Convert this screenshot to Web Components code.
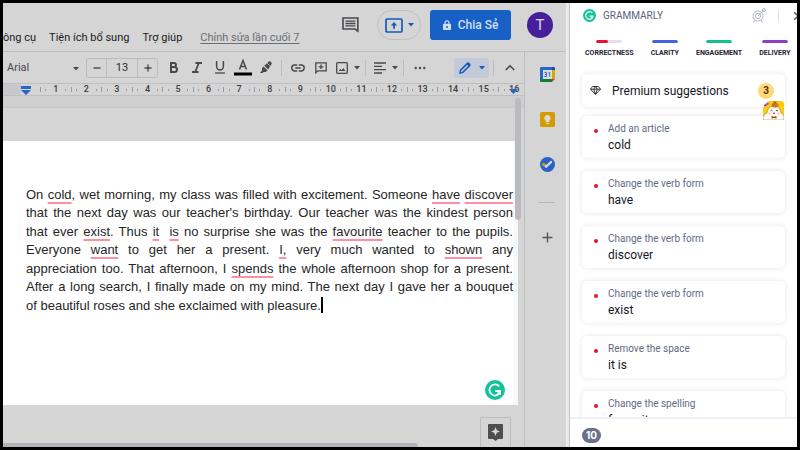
<!DOCTYPE html>
<html lang="vi">
<head>
<meta charset="utf-8">
<meta name="viewport" content="width=device-width, initial-scale=1">
<title>Docs</title>
<style>
  body { margin: 0; background: #000; font-family: Roboto, "Noto Sans", sans-serif; }
</style>
</head>
<body>
<docs-app></docs-app>

<script>
const BASE = `
  * { box-sizing: border-box; }
  button { font: inherit; color: inherit; background: none; border: 0; padding: 0; margin: 0; cursor: pointer; }
  a { color: inherit; text-decoration: none; }
  svg { display: block; flex: none; }
`;

const CARET = '<svg width="6" height="4" viewBox="0 0 6 4" aria-hidden="true"><path d="M0 0h6L3 3.6z" fill="currentColor"/></svg>';

class BaseElement extends HTMLElement {
  constructor() {
    super();
    this.attachShadow({ mode: 'open' });
  }

  connectedCallback() {
    if (this._rendered) return;
    this.shadowRoot.innerHTML = `<style>${BASE}${this.styles()}</style>${this.markup()}`;
    this._rendered = true;
  }

  styles() { return ''; }
  markup() { return ''; }
}

class DocsApp extends BaseElement {
  styles() {
    return `
      :host { display: flex; height: 100vh; box-sizing: border-box; border: 3px solid #000; overflow: hidden; background: #d5d5d5; }
      .docs { flex: 1; min-width: 0; display: flex; flex-direction: column; border-right: 1px solid #c2c2c2; box-shadow: inset -3px 0 #ebebeb; }
      .body { flex: 1; min-height: 0; display: flex; margin-right: 3px; }
      .editor { flex: 1; min-width: 0; display: flex; flex-direction: column; }
      docs-page { flex: 1; min-height: 0; }
      grammar-panel { flex: none; width: 227px; }
    `;
  }
  markup() {
    return `
      <div class="docs">
        <docs-header></docs-header>
        <div class="body">
          <div class="editor">
            <docs-toolbar></docs-toolbar>
            <docs-ruler></docs-ruler>
            <docs-page></docs-page>
          </div>
          <side-rail></side-rail>
        </div>
      </div>
      <grammar-panel></grammar-panel>
    `;
  }
}

class DocsHeader extends BaseElement {
  styles() {
    return `
      :host { display: flex; align-items: center; height: 49px; box-sizing: border-box; padding: 0 13px 4px 0; border-bottom: 1px solid #bdbdbd; margin-right: 3px; font-size: 12px; line-height: 16px; color: #1c1c1c; }
      nav { flex: 1; align-self: flex-end; display: flex; gap: 13px; padding-bottom: 1px; white-space: nowrap; font-size: 11px; }
      .history { margin-left: 5px; color: #6b6e72; text-decoration: underline; text-underline-offset: 2px; }
      .comments { color: #47494d; margin-right: 18px; }
      .present { display: flex; align-items: center; justify-content: center; gap: 5px; width: 44px; height: 30px; margin-right: 9px; border: 1px solid #bfbfbf; border-radius: 15px; color: #1559bd; }
      .share { display: flex; align-items: center; justify-content: center; gap: 7px; width: 81px; height: 30px; margin-right: 16px; border-radius: 3px; background: #1660c6; color: #d5dff0; font-weight: 500; }
      .avatar { width: 26px; height: 26px; border-radius: 50%; background: #46209a; color: #dcd6ea; font-size: 15px; }
    `;
  }
  markup() {
    return `
      <nav aria-label="Menu">
        <a href="#tools">ông cụ</a>
        <a href="#addons">Tiện ích bổ sung</a>
        <a href="#help">Trợ giúp</a>
        <a href="#history" class="history">Chỉnh sửa lần cuối 7</a>
      </nav>
      <button class="comments" aria-label="Comments">
        <svg width="17" height="16" viewBox="0 0 17 16" fill="none" stroke="currentColor" stroke-width="1.6"><path d="M1 1h14.800v13.200L13 12H1z"/><path d="M3.400 4.200h10M3.400 6.500h10M3.400 8.800h10" stroke-width="1.300"/></svg>
      </button>
      <button class="present" aria-label="Present">
        <svg width="18" height="15" viewBox="0 0 18 15"><rect x="1" y="1" width="16" height="13" rx="1" fill="none" stroke="currentColor" stroke-width="1.700"/><path d="M9 4l3.200 3.500H9.900v3.300H8.100V7.500H5.800z" fill="currentColor"/></svg>
        ${CARET}
      </button>
      <button class="share">
        <svg width="8" height="10" viewBox="0 0 8 10"><path d="M2 4V2.800a2 2 0 0 1 4 0V4" fill="none" stroke="currentColor" stroke-width="1.200"/><path fill-rule="evenodd" d="M.8 3.800h6.400q.8 0 .8.800v4.600q0 .8-.8.800H.8Q0 10 0 9.200V4.600q0-.8.800-.8zM4 5.900a1 1 0 1 0 0 2 1 1 0 0 0 0-2z" fill="currentColor"/></svg>
        Chia Sẻ
      </button>
      <button class="avatar">T</button>
    `;
  }
}

class DocsToolbar extends BaseElement {
  styles() {
    return `
      :host { display: flex; align-items: center; height: 31px; padding: 0 3px 0 4px; font-size: 11px; color: #47494d; }
      button { display: flex; align-items: center; justify-content: center; width: 23px; height: 20px; }
      .font { position: relative; width: 72px; margin-right: 7px; }
      .font select { appearance: none; width: 100%; border: 0; margin: 0; padding: 0; background: none; font: inherit; color: inherit; }
      .font svg { position: absolute; right: 0; top: 50%; margin-top: -1px; pointer-events: none; }
      .size { display: flex; width: 72px; height: 20px; margin-right: 4px; border: 1px solid #bcbcbc; border-radius: 3px; }
      .size button { width: 19px; height: 100%; }
      .size input { flex: 1; min-width: 0; padding: 0; border: 0; border-left: 1px solid #bcbcbc; border-right: 1px solid #bcbcbc; background: none; text-align: center; font: inherit; color: #2c2d30; }
      .sep { width: 1px; height: 16px; margin: 0 4px; background: #bcbcbc; }
      .narrow { width: 20px; }
      .caret { width: 9px; }
      .mode { width: 35px; gap: 8px; margin-left: auto; background: #c2cad8; border-radius: 3px; color: #1559bd; }
    `;
  }
  markup() {
    return `
      <div class="font">
        <select aria-label="Font"><option>Arial</option></select>
        ${CARET}
      </div>
      <div class="size">
        <button aria-label="Decrease font size"><svg width="8" height="8" viewBox="0 0 8 8"><path d="M.5 4h7" stroke="currentColor" stroke-width="1.400"/></svg></button>
        <input aria-label="Font size" value="13">
        <button aria-label="Increase font size"><svg width="8" height="8" viewBox="0 0 8 8"><path d="M.5 4h7M4 .5v7" stroke="currentColor" stroke-width="1.400"/></svg></button>
      </div>
      <button aria-label="Bold"><svg width="9" height="11" viewBox="0 0 9 11" fill="none" stroke="currentColor" stroke-width="2"><path d="M2 1h3a2 2 0 0 1 0 4H2zM2 5h3.500a2.400 2.400 0 0 1 0 5H2z"/></svg></button>
      <button aria-label="Italic"><svg width="10" height="11" viewBox="0 0 10 11" fill="none" stroke="currentColor" stroke-width="1.800"><path d="M3.500 1H10M0 10h6.500M6.800 1L3.200 10"/></svg></button>
      <button aria-label="Underline"><svg width="10" height="13" viewBox="0 0 10 13" fill="none" stroke="currentColor"><path d="M1.600 0v5.600a3.400 3.400 0 0 0 6.800 0V0" stroke-width="1.500"/><path d="M0 12h10" stroke-width="1.300"/></svg></button>
      <button aria-label="Text color"><svg width="18" height="17" viewBox="0 0 18 17"><path d="M5.500 10.500L9 1.500l3.500 9M6.600 7.600h4.800" fill="none" stroke="currentColor" stroke-width="1.500"/><path d="M0 13.500h18v3H0z" fill="#000"/></svg></button>
      <button aria-label="Highlight color"><svg width="12" height="13" viewBox="0 0 12 13" fill="currentColor"><path d="M3.500 5.500l4 3.800-1.700 1.700H3.600l-1 1H0l2-2.600V7z"/><path d="M4.300 4.800L8.800.6q.8-.6 1.600 0l1 1q.7.8 0 1.600L8.300 8.500z"/><path d="M7 2l3.800 4" stroke="#d5d5d5" stroke-width=".7"/></svg></button>
      <span class="sep"></span>
      <button aria-label="Insert link"><svg width="14" height="8" viewBox="0 0 14 8" fill="none" stroke="currentColor" stroke-width="1.500"><path d="M6.200 1H3.800a3 3 0 0 0 0 6h2.400M7.800 1h2.400a3 3 0 0 1 0 6H7.800M4.300 4h5.400"/></svg></button>
      <button aria-label="Add comment"><svg width="12" height="12" viewBox="0 0 12 12" fill="none" stroke="currentColor" stroke-width="1.300"><path d="M.8 10.800V.8h10.400v8H2.800zM6 2.500v4.600M3.700 4.800h4.600"/></svg></button>
      <button class="narrow" aria-label="Insert image"><svg width="12" height="12" viewBox="0 0 12 12"><rect x=".7" y=".7" width="10.600" height="10.600" rx="1" fill="none" stroke="currentColor" stroke-width="1.300"/><path d="M2.700 9l1.700-2.200 1.200 1.400L7.400 6l2 3z" fill="currentColor"/></svg></button>
      <button class="caret" aria-label="Image options">${CARET}</button>
      <span class="sep"></span>
      <button class="narrow" aria-label="Align"><svg width="12" height="12" viewBox="0 0 12 12" fill="none" stroke="currentColor" stroke-width="1.300"><path d="M0 1h12M0 4.300h8M0 7.600h12M0 11h8"/></svg></button>
      <button class="caret" aria-label="Align options">${CARET}</button>
      <span class="sep"></span>
      <button aria-label="More"><svg width="12" height="4" viewBox="0 0 12 4" fill="currentColor"><circle cx="1.700" cy="2" r="1.200"/><circle cx="6" cy="2" r="1.200"/><circle cx="10.300" cy="2" r="1.200"/></svg></button>
      <button class="mode" aria-label="Editing mode"><svg width="12" height="12" viewBox="0 0 12 12"><path d="M1 11l.6-2.800L8.400 1.400q.6-.6 1.200 0l1 1q.6.6 0 1.200L3.800 10.400z" fill="none" stroke="currentColor" stroke-width="1.500"/><path d="M7.600 2.200l2.200 2.200L11.300 3 9 .7z" fill="currentColor"/></svg>${CARET}</button>
      <span class="sep"></span>
      <button aria-label="Hide menus"><svg width="10" height="7" viewBox="0 0 10 7"><path d="M.8 6L5 1.800 9.200 6" fill="none" stroke="currentColor" stroke-width="1.600"/></svg></button>
    `;
  }
}

class DocsRuler extends BaseElement {
  styles() {
    return `
      :host { display: block; position: relative; height: 13px; box-sizing: border-box; overflow: hidden; border-top: 1px solid #bfbfc2; border-bottom: 1px solid #bfbfc2; background: linear-gradient(to right, #c7c8cc 18px, #d5d5d5 18px); font-size: 9px; line-height: 11px; color: #3c3d40; }
      .scale { display: grid; grid-template-columns: repeat(16, 1fr); margin-left: 37px; margin-right: -5px; }
      .cell { display: flex; align-items: center; justify-content: space-between; }
      i { width: 1px; height: 5px; background: #98999c; }
      .dot { height: 2px; }
      b { font-weight: 500; width: 10px; display: flex; justify-content: center; }
      .end { width: 0; }
      .mark { position: absolute; top: 2px; }
      .left { left: 18px; }
      .right { right: 6px; top: 5px; }
    `;
  }
  markup() {
    let cells = '';
    for (let n = 1; n <= 16; n++) {
      cells += `<div class="cell"><i></i><i class="dot"></i><b>${n}</b><i class="dot"></i><i class="end"></i></div>`;
    }
    return `
      <div class="scale">${cells}</div>
      <svg class="mark left" width="10" height="9" viewBox="0 0 10 9" fill="#2567cb"><path d="M0 0h10v3H0zM0 4h10L5 9z"/></svg>
      <svg class="mark right" width="9" height="6" viewBox="0 0 9 6" fill="#2567cb"><path d="M0 0h9L4.500 5z"/></svg>
    `;
  }
}

class DocsPage extends BaseElement {
  styles() {
    return `
      :host { display: flex; flex-direction: column; position: relative; }
      .gap { height: 45px; border-top: 11px solid #cfcfcf; box-shadow: inset 0 1px #c9c9c9; }
      .sheet { flex: 1; min-height: 0; padding: 45px 0 0 23px; margin-right: 6px; border-right: 5px solid #f7f8fa; background: #fff; }
      .below { height: 42px; display: flex; align-items: flex-end; }
      .hbar { width: 415px; height: 4px; border-radius: 0 4px 0 0; background: #b3b4b7; }
      .text { display: grid; grid-auto-rows: 1fr; height: 129px; font: 13px/18px "Liberation Sans", Arial, sans-serif; color: #262626; outline: 0; }
      .text div { white-space: nowrap; text-align: justify; text-align-last: justify; }
      .text div:last-child { text-align-last: left; }
      u { text-decoration: underline 2px #ff8ea5; text-underline-offset: 3px; text-decoration-skip-ink: none; }
      .cursor { display: inline-block; width: 2px; height: 16px; background: #000; vertical-align: -3px; }
      .vbar { position: absolute; top: 2px; right: 3px; width: 6px; height: 122px; border-radius: 3px; background: #b9bbbf; }
      .badge { position: absolute; right: 19px; bottom: 47px; }
      .explore { position: absolute; right: 13px; bottom: 0; width: 31px; height: 30px; display: flex; align-items: center; justify-content: center; border: 1px solid #bdbdbd; border-radius: 2px 2px 0 0; border-bottom: 0; }
    `;
  }
  markup() {
    return `
      <div class="gap"></div>
      <div class="sheet">
        <div class="text" contenteditable="true" spellcheck="false" role="textbox" aria-multiline="true" aria-label="Document" lang="en">
          <div>On <u>cold</u>, wet morning, my class was filled with excitement. Someone <u>have</u> <u>discover</u></div>
          <div>that the next day was our teacher's birthday. Our teacher was the kindest person</div>
          <div>that ever <u>exist</u>. Thus <u>it</u>&nbsp; <u>is</u> no surprise she was the <u>favourite</u> teacher to the pupils.</div>
          <div>Everyone <u>want</u> to get her a present. <u>I,</u> very much wanted to <u>shown</u> any</div>
          <div>appreciation too. That afternoon, I <u>spends</u> the whole afternoon shop for a present.</div>
          <div>After a long search, I finally made on my mind. The next day I gave her a bouquet</div>
          <div>of beautiful roses and she exclaimed with pleasure.<span class="cursor"></span></div>
        </div>
      </div>
      <div class="below"><div class="hbar"></div></div>
      <div class="vbar"></div>
      <button class="badge" aria-label="Grammarly"><grammar-logo size="20"></grammar-logo></button>
      <button class="explore" aria-label="Explore">
        <svg width="15" height="17" viewBox="0 0 15 17"><path d="M1 0h13q1 0 1 1v13q0 1-1 1h-4l-2.500 2L5 15H1q-1 0-1-1V1q0-1 1-1z" fill="#4d4e50"/><path d="M7.500 3l1.300 3.200L12 7.500 8.800 8.800 7.500 12 6.200 8.800 3 7.500l3.200-1.300z" fill="#d5d5d5"/></svg>
      </button>
    `;
  }
}

class SideRail extends BaseElement {
  styles() {
    return `
      :host { display: flex; flex-direction: column; align-items: center; flex: none; width: 42px; box-sizing: border-box; padding: 15px 0 0 3px; gap: 30px; border-left: 1px solid #bdbdbd; }
      hr { width: 16px; height: 1px; margin: 0 0 -1px; border: 0; background: #b5b5b5; }
    `;
  }
  markup() {
    return `
      <button aria-label="Calendar"><svg width="15" height="15" viewBox="0 0 15 15"><path d="M1 0h11v3H3v9H0V1q0-1 1-1z" fill="#2567cb"/><path d="M12 0h2q1 0 1 1v2h-3z" fill="#1550a8"/><path d="M12 3h3v9h-3z" fill="#dba400"/><path d="M3 12h9v3H1q-1 0-1-1v-2z" fill="#187a36"/><path d="M12 12h3l-3 3z" fill="#c93a2e"/><path d="M3 3h9v9H3z" fill="#dcdcdc"/><path d="M4.300 5.400h2.200v2H5.200h1.300v2.100H4.300M8.300 6l1.400-.5v4.300" fill="none" stroke="#2567cb" stroke-width=".9"/></svg></button>
      <button aria-label="Keep"><svg width="15" height="15" viewBox="0 0 15 15"><rect width="15" height="15" rx="1.500" fill="#d49b05"/><path d="M7.500 3a3.300 3.300 0 0 1 1.800 6v1H5.700V9a3.300 3.300 0 0 1 1.800-6zM5.900 10.800h3.200v1H5.900z" fill="#dedbd2"/></svg></button>
      <button aria-label="Tasks"><svg width="15" height="15" viewBox="0 0 15 15"><circle cx="7.500" cy="7.500" r="7.500" fill="#2862c4"/><path d="M6.200 9.500l5-4.600" stroke="#dcdcdc" stroke-width="2.200" stroke-linecap="round"/><path d="M5.200 8.700l1 1" stroke="#dcdcdc" stroke-width="2" stroke-linecap="round"/><circle cx="3.800" cy="7.500" r="1.700" fill="#d5a010"/></svg></button>
      <hr>
      <button aria-label="Get add-ons"><svg width="11" height="11" viewBox="0 0 11 11"><path d="M5.500.5v10M.5 5.500h10" stroke="#555658" stroke-width="1.400"/></svg></button>
    `;
  }
}

class GrammarLogo extends BaseElement {
  styles() { return ':host { display: block; }'; }
  markup() {
    const size = this.getAttribute('size');
    return `<svg width="${size}" height="${size}" viewBox="0 0 20 20" aria-hidden="true"><circle cx="10" cy="10" r="10" fill="#12c39a"/><path d="M14.300 6.300A5.600 5.600 0 1 0 13.600 14.300" fill="none" stroke="#fff" stroke-width="1.800"/><path d="M10.200 11h4.800v3.800" fill="none" stroke="#fff" stroke-width="1.800"/><path d="M15.600 11l-3.500 3.600" stroke="#fff" stroke-width="1.600"/></svg>`;
  }
}

class ScoreTab extends BaseElement {
  styles() {
    return `
      :host { display: block; }
      button { display: flex; flex-direction: column; align-items: center; gap: 6px; font-weight: 700; font-size: 7px; line-height: 9px; color: #1f2333; }
      .bar { width: 26px; height: 3px; border-radius: 2px; overflow: hidden; background: #dfe1ee; }
      .fill { display: block; height: 100%; border-radius: 2px; background: ${this.getAttribute('color')}; width: ${this.getAttribute('value')}%; }
    `;
  }
  markup() {
    return '<button><span class="bar"><span class="fill"></span></span><slot></slot></button>';
  }
}

class SuggestionCard extends BaseElement {
  styles() {
    return `
      :host { display: block; }
      button { display: grid; grid-template-columns: 26px 1fr; align-items: center; width: 100%; height: 42px; padding: 6px 0 4px; border-radius: 5px; background: #fff; box-shadow: 0 0 5px rgba(30, 35, 70, .12); text-align: left; }
      .dot { width: 4px; height: 4px; margin: 3px 0 0 12px; border-radius: 50%; background: #e8122e; }
      .kind { font-size: 10px; line-height: 14px; color: #626a86; }
      .word { grid-column: 2; font-size: 12px; line-height: 18px; color: #15171f; }
    `;
  }
  markup() {
    return `<button><span class="dot"></span><span class="kind">${this.getAttribute('kind')}</span><span class="word"><slot></slot></span></button>`;
  }
}

class GrammarPanel extends BaseElement {
  styles() {
    return `
      :host { display: flex; flex-direction: column; overflow: hidden; background: #fff; color: #15171f; }
      header { display: flex; align-items: center; height: 25px; padding: 0 0 0 13px; }
      .name { margin-left: 7px; font-size: 10px; line-height: 14px; color: #5a6280; }
      .goal { margin-left: auto; }
      .line { width: 1px; height: 12px; margin: 0 15px 0 12px; background: #dfe1ea; }
      .close { width: 3px; overflow: hidden; }
      .tabs { display: flex; gap: 17px; padding: 12px 0 0 15px; }
      .premium { position: relative; display: flex; align-items: center; height: 33px; margin: 16px 12px 0; padding: 0 11px 0 8px; border-radius: 5px; box-shadow: 0 0 5px rgba(30, 35, 70, .12); font-size: 12px; text-align: left; }
      .premium .label { flex: 1; margin-left: 11px; }
      .count { width: 16px; height: 16px; border-radius: 50%; background: #ffd978; color: #5a3208; font-size: 10px; font-weight: 700; line-height: 16px; text-align: center; }
      .sticker { position: absolute; right: 1px; top: 27px; z-index: 1; }
      .list { flex: 1; min-height: 0; overflow: hidden; display: flex; flex-direction: column; gap: 13px; padding: 9px 12px 0; }
      footer { display: flex; align-items: center; height: 30px; padding: 5px 12px 0; border-top: 2px solid #efeff8; }
      .total { padding: 0 4px; border-radius: 8px; background: #6a718b; color: #fff; font-family: Inter, sans-serif; font-size: 10px; font-weight: 700; line-height: 15px; }
    `;
  }
  markup() {
    return `
      <header>
        <grammar-logo size="13"></grammar-logo>
        <span class="name">GRAMMARLY</span>
        <button class="goal" aria-label="Goals"><svg width="14" height="15" viewBox="0 0 14 15" fill="none" stroke="#b4b8d0" stroke-width="1"><circle cx="6" cy="8" r="5"/><circle cx="6" cy="8" r="2.600"/><path d="M6 8l5.500-5.500M10.500 3.500V1.200L12 0v2h2l-1.300 1.500zM3 12l-1.500 2.500M9 12l1.500 2.500"/></svg></button>
        <span class="line"></span>
        <button class="close" aria-label="Close"><svg width="8" height="8" viewBox="0 0 8 8"><path d="M0 0l4 4-4 4M4 0l4 4" fill="none" stroke="#4a5270" stroke-width="1.300"/></svg></button>
      </header>
      <div class="tabs">
        <score-tab color="#e8122e" value="46">CORRECTNESS</score-tab>
        <score-tab color="#4364dd" value="100">CLARITY</score-tab>
        <score-tab color="#12c08f" value="100">ENGAGEMENT</score-tab>
        <score-tab color="#8b3fc0" value="100">DELIVERY</score-tab>
      </div>
      <button class="premium">
        <svg width="11" height="9" viewBox="0 0 11 9" fill="none" stroke="#30333f" stroke-width="1"><path d="M2.600.5h5.800l2.100 2.700L5.500 8.500.5 3.200zM.5 3.200h10M3.700 3.200l1.800 5 1.800-5L5.500.6z"/></svg>
        <span class="label">Premium suggestions</span>
        <span class="count">3</span>
        <svg class="sticker" width="21" height="19" viewBox="0 0 21 19"><path d="M0 3q0-3 3-3h15q3 0 3 3v16H0z" fill="#f8cb10"/><path d="M0 0h6L0 7z" fill="#fff"/><path d="M1 4l4-3 1 2-3 2z" fill="#dd4a9b"/><path d="M1 5l2-1" stroke="#4a55c8" stroke-width="1.200"/><path d="M0 19v-3q1-3 4-4 1-7 7-7t7 7q3 1 3 4v3z" fill="#fffdf5" stroke="#aa8540" stroke-width=".6"/><ellipse cx="12" cy="4.200" rx="3.500" ry="2.400" fill="#d2761b"/><path d="M12 3L10 .5h4z" fill="#6d7a20"/><path d="M7.500 10l1-.8 1 .8M13 10l1-.8 1 .8" fill="none" stroke="#4d2c16" stroke-width=".8"/><circle cx="6.500" cy="12.500" r="1" fill="#f5b09a"/><circle cx="15.500" cy="12.500" r="1" fill="#f5b09a"/><ellipse cx="11" cy="12.300" rx="1.100" ry=".8" fill="#c52a2a"/><path d="M8.500 15l2.300.8 2.700-.8v2.600l-2.700-.6-2.300.6z" fill="#9b4a16"/></svg>
      </button>
      <div class="list">
        <suggestion-card kind="Add an article">cold</suggestion-card>
        <suggestion-card kind="Change the verb form">have</suggestion-card>
        <suggestion-card kind="Change the verb form">discover</suggestion-card>
        <suggestion-card kind="Change the verb form">exist</suggestion-card>
        <suggestion-card kind="Remove the space">it is</suggestion-card>
        <suggestion-card kind="Change the spelling">favourite</suggestion-card>
      </div>
      <footer><span class="total">10</span></footer>
    `;
  }
}

customElements.define('grammar-logo', GrammarLogo);
customElements.define('score-tab', ScoreTab);
customElements.define('suggestion-card', SuggestionCard);
customElements.define('grammar-panel', GrammarPanel);
customElements.define('side-rail', SideRail);
customElements.define('docs-page', DocsPage);
customElements.define('docs-ruler', DocsRuler);
customElements.define('docs-toolbar', DocsToolbar);
customElements.define('docs-header', DocsHeader);
customElements.define('docs-app', DocsApp);
</script>
</body>
</html>
